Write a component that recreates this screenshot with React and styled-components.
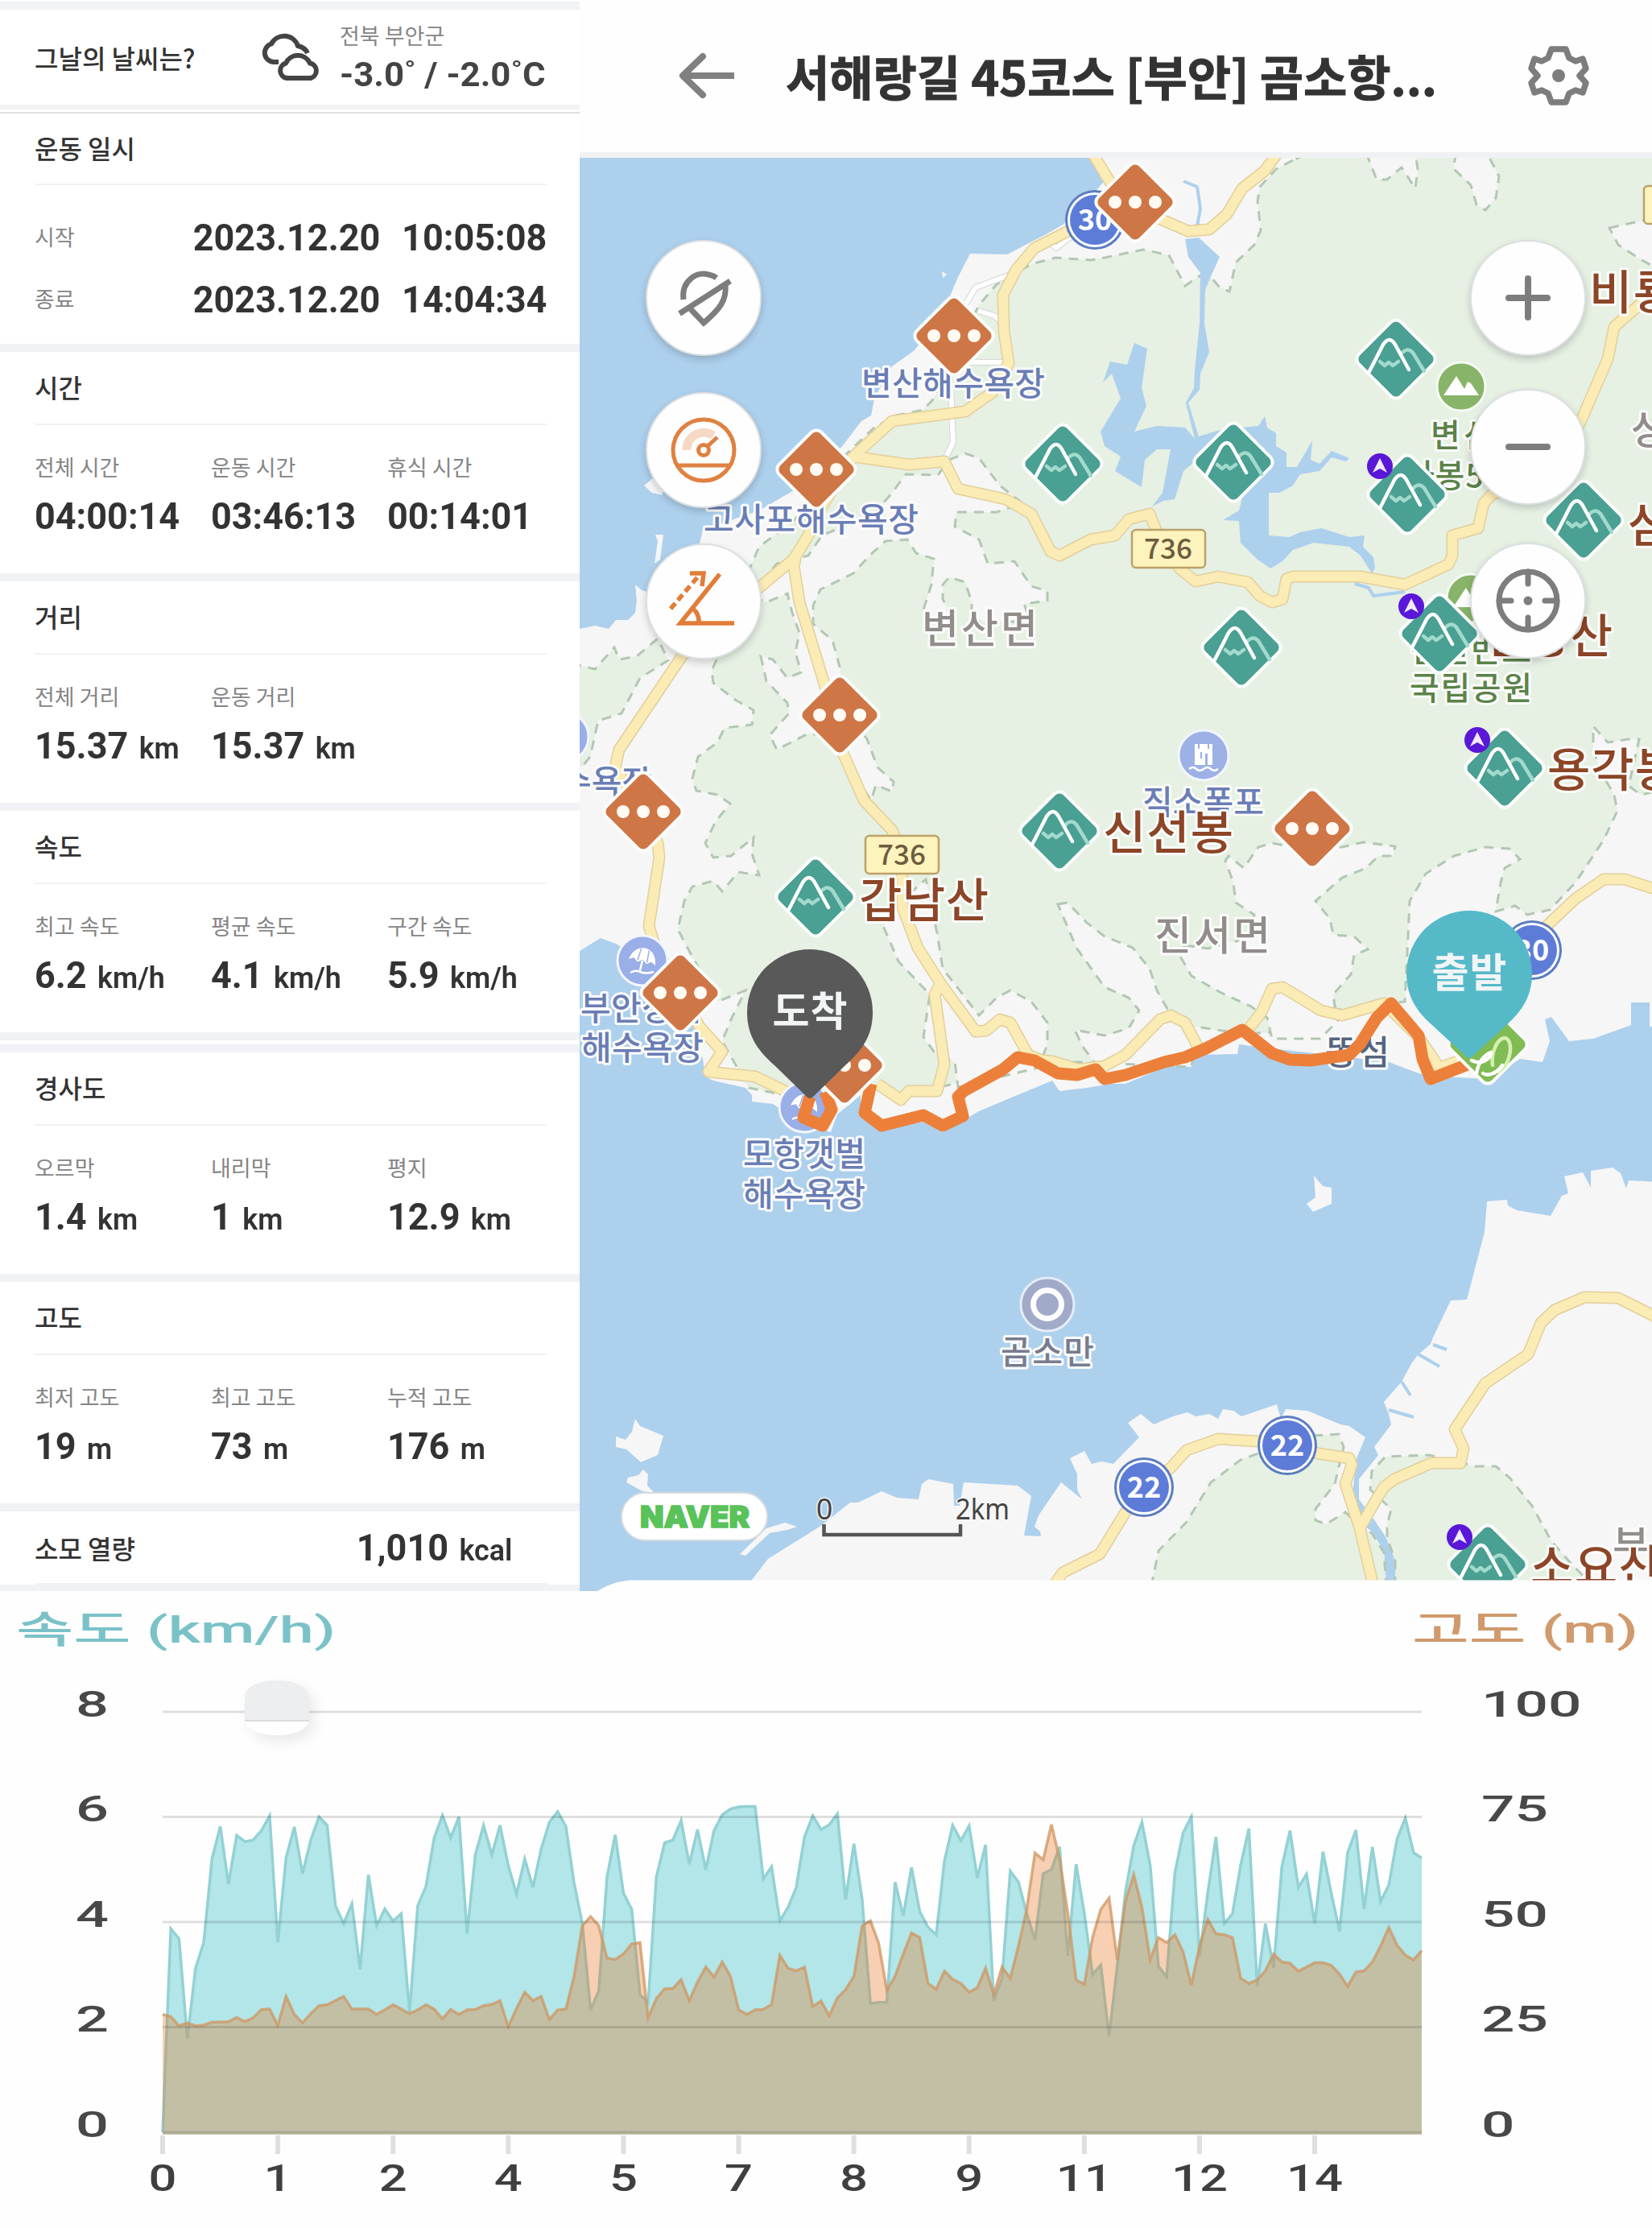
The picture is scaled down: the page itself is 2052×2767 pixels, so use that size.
import { Fragment } from "react";
import styled, { createGlobalStyle } from "styled-components";

const GlobalStyle = createGlobalStyle`
  * {
    box-sizing: border-box;
  }
  body {
    margin: 0;
    background: #fefefe;
    color: #333;
    font-family: "Noto Sans CJK KR", "Noto Sans", sans-serif;
  }
`;

const Page = styled.main`
  width: 2052px;
  height: 2767px;
  overflow: hidden;
`;

const Top = styled.div`
  display: grid;
  grid-template-columns: 720px 1332px;
  height: 1976px;
`;

/* ---------- record panel ---------- */

const Panel = styled.aside`
  display: flex;
  flex-direction: column;
  padding-top: 2px;
  background: #fff;
`;

const Weather = styled.section`
  display: flex;
  align-items: center;
  height: 134px;
  padding: 0 43px;
  border-top: 10px solid #f1f3f4;
  border-bottom: 6px solid #f1f3f4;
  svg {
    margin-left: auto;
    margin-right: 24px;
  }
`;

const WeatherInfo = styled.div`
  width: 255px;
  padding-top: 2px;
`;

const Temperature = styled.div`
  font-family: Roboto, sans-serif;
  font-weight: 700;
  font-size: 42px;
  line-height: 50px;
  margin-top: 7px;
  color: #444;
  white-space: pre;
  transform: scaleX(${(p) => p.$stretch});
  transform-origin: left;
`;

const Title = styled.h2`
  margin: 0;
  font-size: 32px;
  font-weight: 500;
  line-height: 40px;
  color: #333;
`;

const Label = styled.div`
  font-size: 27px;
  line-height: 34px;
  color: #858585;
`;

const Section = styled.section`
  height: ${(p) => p.$height || 285}px;
  margin-top: ${(p) => p.$gap || 0}px;
  padding: 0 41px 0 43px;
  border-top: ${(p) => (p.$thin ? "2px solid #dfdfdf" : "10px solid #f1f2f5")};
`;

const Heading = styled.header`
  display: flex;
  align-items: center;
  height: ${(p) => p.$height || 91}px;
  padding-bottom: 4px;
  border-bottom: 2px solid #f2f2f3;
`;

const Stats = styled.div`
  display: grid;
  grid-template-columns: repeat(3, 219px);
  padding-top: 35px;
`;

const Value = styled.div`
  font-family: Roboto, sans-serif;
  font-weight: 700;
  font-size: 47px;
  line-height: 60px;
  margin-top: ${(p) => p.$top || 0}px;
  color: #333;
  white-space: nowrap;
  transform: scaleX(0.957);
  transform-origin: ${(p) => p.$origin || "left"};
  small {
    margin-left: 14px;
    font-size: 37.5px;
    font-weight: 600;
  }
`;

const Times = styled.div`
  padding-top: 25px;
`;

const TimeRow = styled.div`
  display: flex;
  align-items: center;
  justify-content: space-between;
  height: 77px;
`;

const Stamp = styled(Value)`
  display: flex;
  gap: 28px;
  padding-top: 2px;
`;

const SpeedEnd = styled.div`
  height: 10px;
  background: #f1f2f5;
`;

const Calories = styled.section`
  display: flex;
  flex-direction: column;
  height: 109px;
  border-top: 10px solid #f1f2f5;
  border-bottom: 8px solid #f1f2f5;
  padding: 0 41px 0 43px;
`;

const CaloriesRow = styled.div`
  flex: 1;
  display: flex;
  align-items: center;
  justify-content: space-between;
  padding-right: 43px;
  border-bottom: 2px solid #f2f2f3;
`;

/* ---------- map ---------- */

const Course = styled.section`
  display: flex;
  flex-direction: column;
  background: #fefefe;
`;

const CourseBar = styled.header`
  display: flex;
  align-items: center;
  height: 196px;
  padding: 0 76px 2px 121px;
  border-bottom: 7px solid #f0f1f3;
`;

const CourseName = styled.h1`
  margin: 0 auto 0 62px;
  width: 812px;
  font-size: 59px;
  font-weight: 700;
  line-height: 80px;
  color: #333;
  white-space: nowrap;
  -webkit-text-stroke: 1px #333;
`;

const MapArea = styled.div`
  position: relative;
  height: 1780px;
  overflow: hidden;
  > svg {
    display: block;
  }
`;

const Controls = styled.div`
  position: absolute;
  top: 102px;
  left: ${(p) => p.$left}px;
  display: flex;
  flex-direction: column;
  gap: ${(p) => p.$gap}px;
`;

const RoundButton = styled.button`
  display: grid;
  place-items: center;
  width: 144px;
  height: 144px;
  margin-top: ${(p) => p.$push || 0}px;
  padding: 0;
  border: 2px solid #dcdfe1;
  border-radius: 50%;
  background: #fefefe;
  color: #7d7d7d;
  box-shadow: 0 4px 10px rgba(0, 0, 0, 0.18);
`;

const NaverBadge = styled.div`
  position: absolute;
  left: 51px;
  top: 1657px;
  width: 183px;
  height: 61px;
  border: 2px solid #d5dbe0;
  border-radius: 31px;
  background: #fff;
  display: grid;
  place-items: center;
`;

const SEA = "#add0ed";
const LAND = "#f6f6f6";
const FOREST = "#e6f0e3";

const northLand =
  "1359,190 1374,222 1340,262 1320,279 1301,290 1251,316 1205,315 1190,344 1179,370 1160,402 1136,435 1108,455 1086,495 1082,516 1070,523 1047,553 1014,590 986,609 943,634 873,658 867,683 850,710 804,735 797,733 789,726 791,746 789,761 780,770 765,770 756,781 739,777 720,781 720,1181 746,1165 765,1172 826,1208 869,1266 860,1293 873,1315 876,1337 886,1342 926,1351 934,1360 934,1368 960,1371 982,1386 1000,1395 1032,1406 1040,1384 1069,1360 1069,1386 1095,1404 1147,1393 1171,1406 1199,1390 1216,1380 1307,1342 1316,1355 1350,1351 1380,1346 1398,1346 1450,1324 1490,1310 1537,1309 1539,1297 1560,1300 1650,1310 1725,1319 1762,1333 1790,1337 1850,1340 1888,1315 1916,1319 1925,1293 1919,1266 1927,1263 1949,1293 1979,1290 2026,1273 2026,1245 2049,1245 2049,1275 2060,1275 2060,190";

const southLand =
  "934,1970 934,1962 954,1936 1021,1894 1056,1866 1066,1866 1095,1852 1114,1860 1141,1862 1145,1843 1153,1837 1184,1843 1185,1870 1192,1870 1197,1841 1264,1845 1281,1858 1272,1907 1293,1908 1292,1902 1285,1896 1290,1882 1318,1841 1344,1862 1338,1850 1338,1831 1329,1811 1347,1802 1356,1818 1368,1815 1383,1818 1415,1785 1401,1767 1417,1756 1433,1769 1457,1759 1475,1754 1485,1759 1502,1756 1513,1762 1519,1750 1532,1752 1542,1759 1586,1744 1591,1762 1597,1750 1624,1752 1665,1769 1676,1771 1696,1785 1685,1811 1680,1854 1688,1890 1704,1902 1719,1926 1722,1970 1733,1970 1733,1938 1722,1910 1706,1886 1688,1862 1688,1837 1712,1807 1707,1797 1728,1769 1725,1756 1719,1741 1741,1716 1754,1692 1762,1682 1777,1669 1780,1661 1802,1615 1822,1614 1844,1530 1847,1492 1872,1490 1873,1497 1884,1503 1926,1510 1940,1485 1948,1482 1943,1461 1966,1456 1976,1475 1976,1454 2003,1450 2013,1457 2020,1476 2023,1466 2060,1468 2060,1970";

const islands = [
  "789,1762 795,1771 824,1783 817,1807 796,1816 778,1800 765,1797 765,1784 777,1788 785,1778",
  "799,1825 805,1831 804,1845 813,1854 798,1852 778,1841 780,1835 793,1832",
  "919,1930 952,1898 975,1891 990,1896 978,1900 956,1904 926,1932",
  "1632,1460 1643,1473 1654,1475 1654,1495 1631,1505 1623,1495 1634,1487",
  "800,603 812,593 826,606 822,615 810,612",
  "1170,337 1176,341 1171,345",
  "814,664 824,664 820,695 813,700 817,672",
];

const forests = [
  "1606,199 1585,210 1565,232 1562,250 1566,286 1558,304 1535,326 1527,362 1515,357 1504,344 1491,342 1472,355 1452,317 1420,310 1372,320 1355,323 1311,320 1281,328 1238,353 1216,379 1190,430 1160,495 1147,509 1112,516 1086,531 1050,565 1010,615 986,647 943,679 925,720 891,817 884,833 886,848 913,869 936,882 934,900 900,904 891,922 867,940 860,967 865,982 891,987 907,998 889,1020 876,1047 886,1065 908,1063 936,1040 934,1060 943,1087 917,1083 897,1107 886,1094 860,1101 850,1119 842,1154 856,1181 891,1244 926,1230 908,1266 897,1293 917,1328 930,1351 1000,1365 1070,1340 1110,1362 1190,1345 1290,1318 1380,1320 1450,1290 1485,1275 1545,1284 1580,1282 1667,1253 1745,1244 1749,1163 1751,1119 1771,1085 1806,1063 1845,1052 1875,1054 1888,1067 1869,1078 1864,1096 1858,1132 1882,1125 1897,1136 1925,1130 1957,1096 1992,1043 2009,1007 2005,987 1988,958 1979,931 1979,902 1997,922 2023,918 2036,918 2023,976 2038,987 2070,980 2070,180 1650,180",
  "710,824 739,831 763,804 769,819 791,815 817,793 830,820 795,842 772,886 743,895 733,940 710,968",
  "1430,1970 1439,1926 1474,1890 1504,1841 1541,1813 1563,1805 1632,1783 1663,1781 1669,1797 1658,1843 1634,1874 1634,1888 1647,1893 1671,1878 1688,1894 1704,1904 1719,1928 1722,1970",
  "1733,1970 1733,1938 1723,1910 1723,1894 1728,1874 1702,1850 1704,1827 1721,1809 1775,1807 1832,1821 1858,1821 1875,1835 1903,1870 1927,1914 1949,1939 1979,1970",
];

const clearings = [
  "1179,571 1199,563 1216,569 1242,603 1270,625 1238,636 1188,636 1186,654 1216,670 1227,700 1260,697 1281,728 1301,734 1301,746 1272,750 1280,772 1207,772 1207,748 1199,723 1179,717 1171,726 1171,744 1185,772 1160,772 1147,757 1157,726 1160,694 1138,687 1127,670 1100,672 1080,690 1060,712 1019,732 1010,752 1010,775 1034,795 1043,828 1050,880 1077,918 1090,953 1110,971 1108,983 1088,975 1082,994 1060,960 1040,915 1004,911 965,931 956,913 980,886 978,873 952,846 945,815 960,819 978,842 995,835 988,810 993,786 984,761 978,737 952,748 930,740 965,700 1004,690 1021,665 1086,638 1108,612 1125,589 1165,590",
  "1130,1110 1150,1092 1164,1159 1171,1203 1216,1261 1238,1239 1255,1230 1281,1244 1301,1270 1301,1297 1290,1326 1190,1350 1186,1319 1160,1306 1147,1288 1155,1235 1116,1194 1097,1150",
  "1314,1123 1326,1121 1350,1146 1372,1163 1407,1177 1428,1203 1437,1230 1450,1253 1485,1290 1480,1325 1360,1320 1345,1300 1335,1279 1372,1286 1402,1277 1415,1255 1402,1239 1372,1226 1337,1177",
  "1472,1174 1500,1178 1550,1165 1558,1136 1535,1121 1532,1096 1522,1069 1526,1063 1545,1078 1563,1052 1580,1047 1620,1055 1667,1052 1693,1046 1733,1051 1730,1063 1712,1063 1697,1078 1667,1090 1634,1119 1652,1141 1656,1161 1682,1163 1699,1179 1682,1186 1678,1210 1656,1235 1658,1250 1667,1262 1640,1290 1580,1290 1574,1264 1554,1250 1515,1232 1480,1212 1465,1186",
  "1697,190 1710,223 1723,223 1741,208 1758,234 1761,210 1758,190",
  "1808,190 1806,210 1827,230 1834,254 1845,261 1858,246 1862,219 1847,190",
  "1999,283 2036,275 2070,268 2070,340 2036,321 2010,304",
];

const lakes = [
  "1472,297 1489,295 1515,319 1502,348 1497,360 1496,402 1502,437 1491,464 1490,484 1476,500 1489,542 1519,533 1563,529 1571,517 1574,531 1585,538 1585,554 1598,562 1598,580 1611,580 1630,547 1628,571 1639,576 1654,560 1676,569 1672,573 1654,568 1639,585 1615,589 1606,603 1589,612 1576,612 1576,665 1602,667 1615,661 1641,656 1676,667 1695,665 1693,679 1706,692 1708,705 1704,712 1690,690 1676,679 1632,674 1606,683 1593,697 1578,706 1561,694 1541,674 1539,647 1519,646 1539,634 1545,610 1500,570 1482,575 1470,585 1459,620 1445,622 1431,629 1444,612 1454,558 1437,558 1422,571 1418,605 1385,585 1392,567 1372,554 1367,536 1392,495 1381,464 1370,475 1379,449 1400,453 1409,426 1425,433 1418,482 1424,504 1409,536 1437,529 1472,531 1484,545 1473,500 1483,482 1484,460 1490,402 1491,339 1476,319",
];

const roads = [
  "1357,190 1380,228 1410,251 1441,272 1476,287 1502,285 1524,266 1543,234 1571,212 1587,190",
  "1340,280 1325,288 1285,308 1262,335 1246,366 1247,411 1253,451 1233,487 1199,511 1108,523 1060,567 1129,577 1173,573 1190,607 1249,620 1281,638 1305,685 1316,690 1355,670 1385,665 1402,645 1428,638 1437,661 1465,706 1485,722 1513,716 1550,723 1565,740 1580,748 1593,744 1598,719 1606,716 1689,716 1745,726 1799,701 1804,690 1804,665 1836,656 1843,625 1853,614 1930,590 1964,522 1997,446 2005,406 2036,379 2062,350",
  "1060,567 1014,640 1004,665 986,694 943,730 847,815 769,931 764,953 799,1008 817,1047 819,1065 806,1150 813,1173 845,1233 869,1275 897,1306 880,1331 938,1337 971,1353 1006,1368",
  "989,690 986,703 993,748 1023,846 1047,935 1073,994 1108,1031 1120,1061 1121,1127 1140,1177 1168,1221 1212,1281 1225,1280 1242,1266 1255,1270 1277,1310 1314,1325",
  "1168,1221 1161,1235 1173,1322 1164,1355 1129,1355 1119,1366 1090,1346",
  "1277,1315 1307,1318 1340,1328 1372,1324 1398,1310 1441,1266 1454,1261 1472,1270 1489,1302",
  "1550,1279 1567,1257 1580,1228 1593,1226 1641,1255 1667,1261 1719,1246 1762,1288 1788,1326 1810,1318",
  "1903,1165 1921,1150 1957,1116 1992,1092 2018,1092 2062,1106",
  "1308,1970 1320,1953 1366,1930 1398,1878 1421,1847 1454,1823 1474,1801 1513,1787 1563,1790 1599,1794 1637,1805 1676,1811 1679,1819 1671,1843 1689,1898 1706,1970",
  "1689,1898 1712,1858 1719,1847 1732,1837 1778,1817 1814,1817 1818,1799 1807,1775 1845,1718 1898,1682 1914,1643 1931,1627 1968,1611 2010,1612 2062,1638",
];

const lanes = [
  "1330,294 1312,308 1300,298 1272,321 1258,340 1212,357 1198,380",
  "1215,386 1235,392 1246,402",
  "1181,482 1184,549 1175,568",
  "1205,450 1250,450",
];

const channels = [
  "1470,225 1487,232 1491,259 1487,281",
  "1683,725 1700,730 1706,740 1745,735",
  "1762,1682 1788,1697",
  "1780,1670 1797,1676",
  "1741,1716 1752,1733",
  "1725,1751 1756,1760",
];

const route =
  "1823,1322 1777,1340 1767,1315 1762,1286 1728,1246 1710,1264 1689,1297 1676,1310 1628,1317 1602,1316 1580,1308 1543,1279 1498,1302 1472,1313 1446,1319 1398,1335 1372,1340 1361,1328 1338,1335 1314,1333 1285,1317 1264,1313 1246,1328 1197,1355 1190,1362 1196,1386 1171,1398 1147,1385 1095,1398 1074,1382 1082,1346";
const routeLoop = "1025,1356 1033,1378 1022,1398 998,1388 1006,1362";

const stops = [
  [1185, 417],
  [1014, 583],
  [1410, 251],
  [1043, 888],
  [799, 1008],
  [845, 1233],
  [1049, 1323],
  [1630, 1029],
];

const peaks = [
  [1320, 576],
  [1734, 446],
  [1532, 574],
  [1748, 614],
  [1967, 646],
  [1013, 1114],
  [1316, 1032],
  [1542, 804],
  [1788, 787],
  [1869, 954],
  [1848, 1943],
];

const arrows = [
  [1714, 579],
  [1753, 753],
  [1835, 919],
  [1813, 1909],
];

const kinds = {
  beach: { size: 41, color: "#6a7db5", weight: 500 },
  park: { size: 40, color: "#5b8349", weight: 500 },
  town: { size: 50, color: "#928d8b", weight: 500 },
  peak: { size: 58, color: "#8c4526", weight: 500 },
  bay: { size: 41, color: "#777c90", weight: 500 },
  isle: { size: 42, color: "#56647f", weight: 500 },
};

// x is the left edge, y the middle of the line
const placesBelow = [
  ["beach", "변산해수욕장", 1070, 476, 228],
  ["beach", "고사포해수욕장", 874, 645, 267],
  ["beach", "수욕장", 697, 971, 113],
  ["beach", "부안상록", 721, 1252, 152],
  ["beach", "해수욕장", 722, 1301, 152],
  ["beach", "모항갯벌", 923, 1433, 152],
  ["beach", "해수욕장", 923, 1483, 152],
  ["beach", "직소폭포", 1419, 996, 151],
  ["bay", "곰소만", 1243, 1679, 116],
  ["isle", "똥섬", 1646, 1306, 80],
  ["park", "변산", 1777, 540, 78],
  ["park", "사봉5", 1745, 590, 98],
  ["park", "변산반도", 1751, 807, 151],
  ["park", "국립공원", 1751, 854, 152],
  ["town", "변산면", 1145, 780, 144],
  ["town", "진서면", 1434, 1161, 144],
  ["town", "상", 2026, 533, 46],
  ["town", "부", 2003, 1918, 46],
];

const placesAbove = [
  ["peak", "갑남산", 1067, 1118, 161],
  ["peak", "신선봉", 1370, 1034, 162],
  ["peak", "용각봉", 1922, 956, 162],
  ["peak", "비룡", 1974, 363, 108],
  ["peak", "삼", 2022, 652, 54],
  ["peak", "인장산", 1844, 790, 159],
  ["peak", "소요산", 1901, 1946, 163],
];

function Place({ place }) {
  const [kind, text, x, y, width] = place;
  const { size, color, weight } = kinds[kind];
  return (
    <text
      x={x}
      y={y + size * 0.37}
      textLength={width}
      fontSize={size}
      fontWeight={weight}
      fill={color}
      stroke="#fbfcfb"
      strokeWidth="6"
      strokeLinejoin="round"
      paintOrder="stroke"
    >
      {text}
    </text>
  );
}

function Diamond({ color, children, x, y }) {
  return (
    <g transform={`translate(${x} ${y})`}>
      <rect x="-37" y="-37" width="74" height="74" rx="9" fill={color} stroke="#fbfdfb" strokeWidth="4" transform="rotate(45)" />
      {children}
    </g>
  );
}

function Stop({ x, y }) {
  return (
    <Diamond x={x} y={y} color="#cf7646">
      {[-25, 0, 25].map((cx) => (
        <circle key={cx} cx={cx} r="8" fill="#fffaf2" />
      ))}
    </Diamond>
  );
}

function Peak({ x, y }) {
  return (
    <Diamond x={x} y={y} color="#4aa092">
      <g fill="none" strokeWidth="4.5" strokeLinecap="round" strokeLinejoin="round">
        <path d="M-20 3 L-14 8 L-9 4 L-4 8 L3 3 M6 -6 Q14 -16 21 -8 L35 15" stroke="#a2dacd" />
        <path d="M-34 17 L-16 -18 Q-8 -30 -1 -18 L16 13" stroke="#fff" />
      </g>
    </Diamond>
  );
}

function Shield({ x, y, text, r = 36 }) {
  return (
    <g transform={`translate(${x} ${y})`}>
      <circle r={r + 1} fill="#5b7dbf" />
      <circle r={r - 2} fill="#fff" />
      <circle r={r - 5} fill="#5d7cd8" />
      <text y="13" textAnchor="middle" fontSize="36" fontWeight="600" fill="#fff" fontFamily="Noto Sans CJK KR">
        {text}
      </text>
    </g>
  );
}

function RoadSign({ x, y, text }) {
  return (
    <g transform={`translate(${x} ${y})`}>
      <rect x="1" y="1" width="91" height="47" rx="5" fill="#fdf3bd" stroke="#bda16a" strokeWidth="2.5" />
      <text x="46" y="37" textAnchor="middle" textLength="60" fontSize="35" fontWeight="500" fill="#6e5c3f" fontFamily="Noto Sans CJK KR">
        {text}
      </text>
    </g>
  );
}

function Pin({ x, y, color, text, tip }) {
  return (
    <g transform={`translate(${x} ${y})`}>
      <path
        d={`M-78 0 A78 78 0 1 1 78 0 C78 32 62 50 44 66 L4 ${tip - 3} Q0 ${tip + 1} -4 ${tip - 3} L-44 66 C-62 50 -78 32 -78 0 Z`}
        fill={color}
      />
      <text y="17" textAnchor="middle" textLength="93" fontSize="50" fontWeight="700" fill="#f1f5f5">
        {text}
      </text>
    </g>
  );
}

function Umbrella({ x, y }) {
  return (
    <g transform={`translate(${x} ${y})`}>
      <circle r="31" fill="#9aaee8" stroke="#f2f6fd" strokeWidth="3" />
      <g transform="rotate(14)">
        <path d="M-17 2 Q-14 -15 0 -16 Q14 -15 17 2 L11 -1 L6 3 L0 -1 L-6 3 L-11 -1 Z" fill="#fff" />
        <path d="M-5 -14 L-6 1 M5 -14 L6 1" stroke="#9aaee8" strokeWidth="1.5" />
        <path d="M0 0 V13" stroke="#fff" strokeWidth="2.5" />
      </g>
      <path d="M-15 15 Q-9 11 -3 14 Q4 17 14 14" fill="none" stroke="#fff" strokeWidth="2.5" />
    </g>
  );
}

function Mount({ x, y }) {
  return (
    <g transform={`translate(${x} ${y})`}>
      <circle r="30" fill="#88b469" stroke="#f5faf2" strokeWidth="3" />
      <path d="M-22 11 L-6 -13 L4 3 L8 -6 L12 -4 L22 11 Z" fill="#fff" />
    </g>
  );
}

function CourseMap() {
  return (
    <svg width="1332" height="1780" viewBox="720 196 1332 1780">
      <rect x="720" y="190" width="1332" height="1790" fill={SEA} />
      <g fill={LAND}>
        <polygon points={northLand} />
        <polygon points={southLand} />
        {islands.map((p) => (
          <polygon key={p} points={p} />
        ))}
      </g>
      <g stroke="#b3c7b4" strokeWidth="3" strokeDasharray="12 9">
        {forests.map((p) => (
          <polygon key={p} points={p} fill={FOREST} />
        ))}
        {clearings.map((p) => (
          <polygon key={p} points={p} fill={LAND} />
        ))}
      </g>
      {lakes.map((p) => (
        <polygon key={p} points={p} fill={SEA} />
      ))}
      <g fill="none" strokeLinejoin="round">
        {channels.map((p) => (
          <polyline key={p} points={p} stroke={SEA} strokeWidth="4" />
        ))}
        {lanes.map((p) => (
          <Fragment key={p}>
            <polyline points={p} stroke="#d6d6d6" strokeWidth="8" />
            <polyline points={p} stroke="#fff" strokeWidth="6" />
          </Fragment>
        ))}
        {roads.map((p) => (
          <polyline key={p} points={p} stroke="#e2cf9c" strokeWidth="15" />
        ))}
        {roads.map((p) => (
          <polyline key={p} points={p} stroke="#fbebb5" strokeWidth="12" />
        ))}
      </g>

      <Shield x={1360} y={273} text="30" />
      <Shield x={1903} y={1180} text="30" />
      <Shield x={1421} y={1847} text="22" />
      <Shield x={1599} y={1795} text="22" />
      <RoadSign x={1405} y={657} text="736" />
      <RoadSign x={1074} y={1037} text="736" />
      <RoadSign x={2041} y={230} text="736" />

      <Umbrella x={798} y={1193} />
      <Umbrella x={999} y={1375} />
      <circle cx="700" cy="915" r="31" fill="#9aaee8" stroke="#f2f6fd" strokeWidth="3" />
      <g transform="translate(1495 938)">
        <circle r="31" fill="#9db1e6" stroke="#f2f6fd" strokeWidth="3" />
        <path d="M-11 -14 H11 V12 H5 V-2 H2 V12 H-11 Z" fill="#fff" />
        <path d="M-6 -14 V-8 M-3 -4 V4 M6 -14 V-8" stroke="#9db1e6" strokeWidth="2" />
        <path d="M-18 17 Q-13 13 -9 17 T0 17 T9 17 T18 17" fill="none" stroke="#fff" strokeWidth="2.5" />
      </g>
      <Mount x={1815} y={480} />
      <Mount x={1827} y={743} />
      <g transform="translate(1301 1620)">
        <circle r="33" fill="#a1aac8" stroke="#e4edf7" strokeWidth="3" />
        <circle r="17.5" fill="none" stroke="#fff" strokeWidth="7" />
      </g>

      {placesBelow.map((p) => (
        <Place key={p[1] + p[2] + p[3]} place={p} />
      ))}

      <g fill="none" stroke="#ec803a" strokeWidth="15" strokeLinejoin="round">
        <polyline points={route} />
        <polyline points={routeLoop} />
      </g>

      {stops.map(([x, y]) => (
        <Stop key={`${x}-${y}`} x={x} y={y} />
      ))}
      {placesAbove.map((p) => (
        <Place key={p[1]} place={p} />
      ))}
      {peaks.map(([x, y]) => (
        <Peak key={`${x}-${y}`} x={x} y={y} />
      ))}
      {arrows.map(([x, y]) => (
        <g key={x} transform={`translate(${x} ${y})`}>
          <circle r="16" fill="#5a17d8" />
          <path d="M0 -10 L9 8 L0 3 L-9 8 Z" fill="#f1e9ff" />
        </g>
      ))}
      <Diamond x={1848} y={1297} color="#80bb54">
        <g fill="none" strokeWidth="4.5" strokeLinecap="round">
          <path d="M14 34 C30 22 32 -4 22 -8 C10 -8 4 14 6 26" stroke="#d6efb0" />
          <path d="M-20 20 C-8 26 4 18 4 10 M-14 36 C-12 24 -6 14 4 10 M-6 36 C0 40 12 36 18 26" stroke="#fff" />
        </g>
      </Diamond>
      <Pin x={1006} y={1257} tip={108} color="#595959" text="도착" />
      <Pin x={1825} y={1209} tip={106} color="#55b9c8" text="출발" />

      <g fill="#444" fontSize="36" fontFamily="Noto Sans" stroke="#f6f6f6" strokeWidth="3" paintOrder="stroke">
        <text x="1024" y="1887" textAnchor="middle">
          0
        </text>
        <text x="1187" y="1887" textLength="67" lengthAdjust="spacingAndGlyphs">
          2km
        </text>
      </g>
      <path d="M1023.5 1893 V1906 H1193 V1893" fill="none" stroke="#555" strokeWidth="4.5" />
      {/* top edge of the bottom sheet */}
      <path d="M742 1976 Q762 1963 787 1962.5 H2052 V1976 Z" fill="#fefefe" />
    </svg>
  );
}

/* ---------- icons ---------- */

const Icon = ({ children, width = 100 }) => (
  <svg width={width} height={width} viewBox="-50 -50 100 100" fill="none" stroke="currentColor">
    {children}
  </svg>
);

const CloudIcon = () => (
  <svg width="74" height="60" viewBox="0 0 74 60" fill="none" stroke="#444" strokeWidth="6">
    <path d="M22 36 H16 A11.5 11.5 0 0 1 13 13.5 A18 18 0 0 1 46 16 Q55 18 58 25" />
    <path d="M32 56 A9.5 9.5 0 0 1 31 37.5 A16.5 16.5 0 0 1 61 37.5 A9.5 9.5 0 0 1 62 56 Z" strokeLinejoin="round" />
  </svg>
);

const ArrowIcon = () => (
  <svg width="73" height="60" viewBox="0 0 73 60" fill="none" stroke="#808080" strokeWidth="8">
    <path d="M5 30 H71" />
    <path d="M32 6 L7 30 L32 54" strokeLinecap="round" strokeLinejoin="round" />
  </svg>
);

const GearIcon = () => (
  <svg width="80" height="80" viewBox="-40 -40 80 80" fill="none" stroke="#7d7d7d" strokeWidth="7.5" strokeLinejoin="round">
    <path d="M-9 -33 H9 L13 -22 L21 -18 L30 -21 L34 -9 L26 0 L34 9 L30 21 L21 18 L13 22 L9 33 H-9 L-13 22 L-21 18 L-30 21 L-34 9 L-26 0 L-34 -9 L-30 -21 L-21 -18 L-13 -22 Z" />
    <circle r="8" fill="#7d7d7d" stroke="none" />
  </svg>
);

const HeadingOffIcon = () => (
  <Icon>
    <g strokeWidth="7">
      <path d="M-25 2 C-28 -21 -9 -33 6 -29 Q12 -28 16 -25" />
      <path d="M27 -17 C29 3 20 14 0 31 L-16 14" />
      <path d="M-30 19.5 L33 -21" />
    </g>
  </Icon>
);

const GaugeIcon = () => (
  <Icon>
    <path d="M-21 0 A21 21 0 0 1 12 -18" stroke="#f6d9c4" strokeWidth="11" />
    <g stroke="#df8142" strokeWidth="5">
      <circle r="38" />
      <path d="M-33 19 H33 M5 -5 L17 -16" />
      <circle r="6.5" />
    </g>
  </Icon>
);

const SlopeIcon = () => (
  <Icon>
    <g stroke="#e27d38" strokeWidth="5.5">
      <path d="M38 27 H-29 L20 -34" />
      <path d="M-15 8 Q-5 14 -6 27" />
      <path d="M-41 9 L-6 -32" strokeDasharray="9 5" />
      <path d="M-17 -35 H0 L-2 -19" />
    </g>
  </Icon>
);

const PlusIcon = () => (
  <Icon>
    <path d="M-24 0 H24 M0 -24 V24" strokeWidth="8" strokeLinecap="round" />
  </Icon>
);

const MinusIcon = () => (
  <Icon>
    <path d="M-24 0 H24" strokeWidth="8" strokeLinecap="round" />
  </Icon>
);

const TargetIcon = () => (
  <Icon>
    <circle r="36" strokeWidth="7" />
    <path d="M0 -36 V-21 M0 36 V21 M-36 0 H-21 M36 0 H21" strokeWidth="7" strokeLinecap="round" />
    <circle r="5.5" fill="currentColor" stroke="none" />
  </Icon>
);

/* ---------- chart ---------- */

const ChartArea = styled.section`
  height: 791px;
  background: #fefefe;
  svg {
    display: block;
  }
`;

const speed = [
  0, 3.87, 3.68, 1.78, 3.12, 3.61, 5.2, 5.82, 4.72, 5.65, 5.53, 5.56, 5.74, 6.02, 3.61, 5.22, 5.81, 4.92, 5.56, 6.0,
  5.84, 4.31, 3.97, 4.35, 3.1, 4.9, 3.93, 4.25, 4.02, 4.16, 2.28, 4.31, 4.68, 5.6, 6.03, 5.6, 6.0, 3.78, 5.28, 5.84,
  5.28, 5.84, 5.08, 4.53, 5.2, 4.66, 5.39, 5.9, 6.1, 5.82, 4.74, 3.97, 2.32, 2.7, 4.86, 5.66, 4.55, 4.24, 2.62, 2.47,
  4.86, 5.51, 5.56, 5.93, 5.1, 5.76, 5.0, 5.74, 6.04, 6.15, 6.19, 6.2, 6.2, 4.82, 5.05, 4.02, 4.28, 4.66, 5.62, 6.02,
  5.76, 5.85, 6.06, 4.43, 5.49, 4.43, 2.45, 2.47, 2.47, 4.76, 4.12, 5.04, 4.2, 3.9, 3.76, 5.16, 5.84, 5.55, 5.83, 4.84,
  5.47, 2.5, 2.93, 4.97, 4.76, 4.16, 3.66, 4.92, 5.0, 5.43, 3.35, 5.1, 4.16, 3.0, 3.18, 1.82, 3.16, 4.58, 5.45, 5.9,
  5.08, 3.16, 2.95, 4.93, 5.7, 6.0, 3.35, 4.55, 5.62, 3.97, 4.16, 5.08, 5.78, 2.78, 3.97, 3.12, 5.05, 5.74, 4.66, 4.91,
  3.97, 5.34, 4.55, 3.82, 5.32, 5.75, 4.25, 5.43, 4.39, 4.7, 5.58, 5.98, 5.32, 5.22,
];

const altitude = [
  28, 27.5, 25.3, 26, 25.3, 25.5, 26.2, 26.2, 26.3, 27.3, 26.3, 27.2, 29.2, 29.3, 25.4, 32.3, 28, 26, 28.2, 30.1,
  30.3, 31.3, 32.3, 29.3, 29.3, 29.3, 28, 29.1, 30.3, 29.3, 28.2, 29.1, 30.3, 29.3, 27, 29.2, 28, 29.1, 29.2, 30.1,
  30.4, 31.3, 25.1, 29.4, 33.3, 31.3, 32.3, 26.8, 29.1, 29.3, 37.1, 49.1, 51.3, 49.1, 41.4, 41.1, 42.4, 44.8, 45.1, 27.2,
  31.8, 34.1, 34.2, 36.3, 31.3, 35.7, 39.3, 36.9, 40.5, 37.1, 29.1, 28, 29.1, 29.2, 30.4, 42.1, 39, 38.4, 39.3, 29.9,
  31.2, 27.7, 32, 33.9, 37.1, 49.1, 50.3, 45.1, 33.8, 37.1, 42.4, 47.4, 46.3, 35.4, 34, 38.3, 36.4, 35.4, 33.3, 34.4,
  39, 32.8, 39.3, 36.6, 44.3, 53, 66.4, 64.8, 73.2, 65, 52, 36.2, 35.2, 46.3, 53, 55.7, 41, 54.9, 61.3, 53.5,
  41, 46.3, 45.1, 47, 42.9, 35, 44.3, 50.6, 47.2, 47, 46.3, 36.6, 35.4, 36.2, 38.4, 42.4, 40.5, 40.2, 38.3, 39.3,
  40.3, 40.3, 39.7, 37.6, 34.7, 38.1, 38.4, 40.5, 44.3, 48.7, 44.5, 42.1, 41, 43.2,
];

const PLOT = { left: 202, right: 1766, top: 150, bottom: 672 };

const toLine = (values, max) =>
  values
    .map((v, i) => {
      const x = PLOT.left + (i * (PLOT.right - PLOT.left)) / (values.length - 1);
      const y = PLOT.bottom - (v / max) * (PLOT.bottom - PLOT.top);
      return `${x.toFixed(1)},${y.toFixed(1)}`;
    })
    .join(" ");

const speedLine = toLine(speed, 8);
const altitudeLine = toLine(altitude, 100);
const floor = `${PLOT.right},${PLOT.bottom + 3} ${PLOT.left},${PLOT.bottom + 3}`;

const rows = [
  [8, 100],
  [6, 75],
  [4, 50],
  [2, 25],
  [0, 0],
];
const distances = [0, 1, 2, 4, 5, 7, 8, 9, 11, 12, 14];

function Chart() {
  return (
    <svg width="2052" height="791" viewBox="0 0 2052 791" fontFamily="Roboto, 'Noto Sans CJK KR', sans-serif">
      <text x="20" y="64" fontSize="47" fontWeight="500" textLength="397" lengthAdjust="spacingAndGlyphs" fill="#7ac2c8">
        속도 (km/h)
      </text>
      <text x="1754" y="64" fontSize="47" fontWeight="500" textLength="281" lengthAdjust="spacingAndGlyphs" fill="#d09a6c">
        고도 (m)
      </text>
      <polygon points={`${speedLine} ${floor}`} fill="#b2e6e9" />
      <polyline points={speedLine} fill="none" stroke="#93d1d4" strokeWidth="3.5" />
      <polygon points={`${altitudeLine} ${floor}`} fill="rgb(233, 108, 21)" fillOpacity="0.32" />
      <polyline points={altitudeLine} fill="none" stroke="#cf9560" strokeOpacity="0.75" strokeWidth="3.5" />
      {rows.map(([left, right], i) => {
        const y = PLOT.top + i * 130.5;
        return (
          <g key={left} fontSize="45" fontWeight="500" fill="#484848">
            <line x1={PLOT.left} x2={PLOT.right} y1={y} y2={y} stroke="#000" strokeOpacity="0.12" strokeWidth="3" />
            <text x="94" y={y + 5.5} textLength="41" lengthAdjust="spacingAndGlyphs">
              {left}
            </text>
            <text x="1840" y={y + 5.5} textLength={String(right).length * 41.5} lengthAdjust="spacingAndGlyphs">
              {right}
            </text>
          </g>
        );
      })}
      {distances.map((d, i) => {
        const x = PLOT.left + i * 143.1;
        const width = String(d).length * 35;
        return (
          <g key={d}>
            <rect x={x - 3} y="676" width="6" height="23" fill="#dfdfdf" />
            <text x={x - width / 2} y="745" fontSize="46" fontWeight="500" fill="#3f3f3f" textLength={width} lengthAdjust="spacingAndGlyphs">
              {d}
            </text>
          </g>
        );
      })}
      <g filter="drop-shadow(6px 8px 8px rgba(0, 0, 0, 0.08))">
        <path d="M304 161 V128 Q312 111 344 111 Q376 111 384 128 V161 Z" fill="#edeef0" />
        <path d="M304 162 H384 Q376 179 344 179 Q312 179 304 162 Z" fill="#fff" />
        <path d="M304 161 H384" stroke="#dcdcdc" strokeWidth="2" />
      </g>
    </svg>
  );
}

const groups = [
  {
    title: "시간",
    stats: [
      ["전체 시간", "04:00:14"],
      ["운동 시간", "03:46:13"],
      ["휴식 시간", "00:14:01"],
    ],
  },
  {
    title: "거리",
    stats: [
      ["전체 거리", "15.37", "km"],
      ["운동 거리", "15.37", "km"],
    ],
  },
  {
    title: "속도",
    stats: [
      ["최고 속도", "6.2", "km/h"],
      ["평균 속도", "4.1", "km/h"],
      ["구간 속도", "5.9", "km/h"],
    ],
  },
  {
    title: "경사도",
    gap: 5,
    stats: [
      ["오르막", "1.4", "km"],
      ["내리막", "1", "km"],
      ["평지", "12.9", "km"],
    ],
  },
  {
    title: "고도",
    stats: [
      ["최저 고도", "19", "m"],
      ["최고 고도", "73", "m"],
      ["누적 고도", "176", "m"],
    ],
  },
];

export default function App() {
  return (
    <Page>
      <GlobalStyle />
      <Top>
        <Panel>
          <Weather>
            <Title>그날의 날씨는?</Title>
            <CloudIcon />
            <WeatherInfo>
              <Label>전북 부안군</Label>
              <Temperature $stretch={1.04}>-3.0˚ / -2.0˚C</Temperature>
            </WeatherInfo>
          </Weather>

          <Section $thin $gap={3} $height={288}>
            <Heading $height={89}>
              <Title>운동 일시</Title>
            </Heading>
            <Times>
              <TimeRow>
                <Label>시작</Label>
                <Stamp $origin="right">
                  <span>2023.12.20</span>
                  <span>10:05:08</span>
                </Stamp>
              </TimeRow>
              <TimeRow>
                <Label>종료</Label>
                <Stamp $origin="right">
                  <span>2023.12.20</span>
                  <span>14:04:34</span>
                </Stamp>
              </TimeRow>
            </Times>
          </Section>

          {groups.map((group) => (
            <Fragment key={group.title}>
              {group.gap && <SpeedEnd />}
              <Section $gap={group.gap}>
                <Heading>
                  <Title>{group.title}</Title>
                </Heading>
                <Stats>
                  {group.stats.map(([label, value, unit]) => (
                    <div key={label}>
                      <Label>{label}</Label>
                      <Value $top={14}>
                        {value}
                        {unit && <small>{unit}</small>}
                      </Value>
                    </div>
                  ))}
                </Stats>
              </Section>
            </Fragment>
          ))}

          <Calories>
            <CaloriesRow>
              <Title>소모 열량</Title>
              <Value $origin="right" $top={3}>
                1,010<small>kcal</small>
              </Value>
            </CaloriesRow>
          </Calories>
        </Panel>

        <Course>
          <CourseBar>
            <ArrowIcon />
            <CourseName>서해랑길 45코스 [부안] 곰소항...</CourseName>
            <GearIcon />
          </CourseBar>
          <MapArea>
            <CourseMap />
            <Controls $left={82} $gap={44.5}>
              <RoundButton aria-label="방향">
                <HeadingOffIcon />
              </RoundButton>
              <RoundButton aria-label="속도">
                <GaugeIcon />
              </RoundButton>
              <RoundButton aria-label="경사도">
                <SlopeIcon />
              </RoundButton>
            </Controls>
            <Controls $left={1106} $gap={41}>
              <RoundButton aria-label="확대">
                <PlusIcon />
              </RoundButton>
              <RoundButton aria-label="축소">
                <MinusIcon />
              </RoundButton>
              <RoundButton aria-label="현재 위치" $push={6}>
                <TargetIcon />
              </RoundButton>
            </Controls>
            <NaverBadge>
              <svg width="140" height="40" viewBox="0 0 140 40">
                <text
                  x="2"
                  y="33"
                  fontFamily="Inter"
                  fontWeight="900"
                  fontSize="37"
                  fill="#59c259"
                  stroke="#59c259"
                  strokeWidth="1.5"
                  textLength="136"
                  lengthAdjust="spacingAndGlyphs"
                >
                  NAVER
                </text>
              </svg>
            </NaverBadge>
          </MapArea>
        </Course>
      </Top>
      <ChartArea>
        <Chart />
      </ChartArea>
    </Page>
  );
}
